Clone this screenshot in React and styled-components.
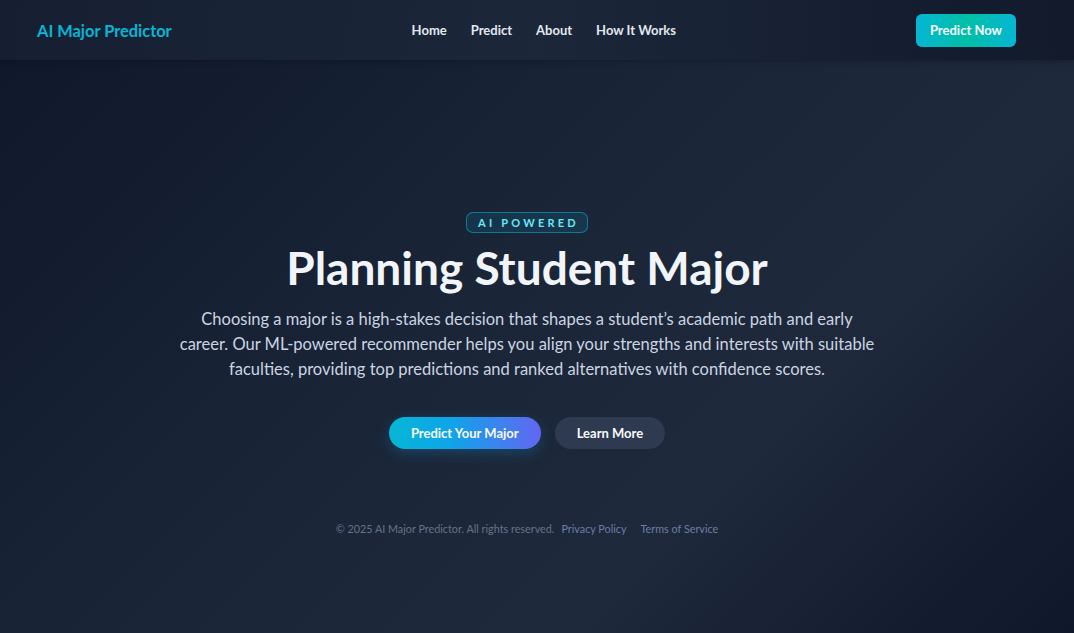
import styled, { createGlobalStyle } from "styled-components";

const GlobalStyle = createGlobalStyle`
  * { box-sizing: border-box; }
  html, body { margin: 0; padding: 0; }
  body {
    font-family: "Lato", "Noto Sans", sans-serif;
    background: #0f172a;
    color: #e2e8f0;
  }
`;

const Page = styled.div`
  min-height: 633px;
  display: flex;
  flex-direction: column;
  background: linear-gradient(135deg, #0f172a 0%, #1a2538 45%, #1e293b 70%, #0f172a 100%);
`;

const NavBar = styled.header`
  height: 60px;
  display: flex;
  align-items: center;
  justify-content: space-between;
  padding: 0 58px 0 37px;
  background: linear-gradient(90deg, rgba(23, 32, 51, 0.9), rgba(28, 39, 58, 0.9) 50%, rgba(17, 25, 43, 0.95));
  box-shadow: 0 1px 6px rgba(0, 0, 0, 0.25);
`;

const Logo = styled.div`
  font-size: 16.4px;
  font-weight: 700;
  color: #06b6d4;
`;

const Links = styled.nav`
  display: flex;
  gap: 24px;
`;

const NavLink = styled.a`
  font-size: 13px;
  font-weight: 700;
  color: #e2e8f0;
  text-decoration: none;
`;

const NavButton = styled.button`
  height: 33px;
  padding: 0 14px;
  border: none;
  border-radius: 6px;
  background: linear-gradient(90deg, #06b6d4, #00bfa5 50%, #06b6d4);
  color: #f8fafc;
  font-family: inherit;
  font-size: 13px;
  font-weight: 700;
`;

const Hero = styled.main`
  flex: 1;
  display: flex;
  flex-direction: column;
  align-items: center;
  padding: 152px 20px 0 0;
  text-align: center;
`;

const Badge = styled.span`
  display: inline-block;
  padding: 3px 8px 3px 11px;
  border: 1px solid rgba(6, 182, 212, 0.55);
  border-radius: 7px;
  background: rgba(6, 182, 212, 0.12);
  color: #67e8f9;
  font-size: 11px;
  font-weight: 700;
  letter-spacing: 3.2px;
`;

const Title = styled.h1`
  margin: 7px 0 12px;
  font-size: 46px;
  line-height: 1.2;
  font-weight: 700;
  color: #f1f5f9;
`;

const Lead = styled.p`
  margin: 0;
  max-width: 700px;
  font-size: 16.5px;
  line-height: 25px;
  color: #cbd5e1;
`;

const Actions = styled.div`
  display: flex;
  gap: 14px;
  margin-top: 35px;
`;

const Pill = styled.button`
  height: 32px;
  padding: 0 22px;
  border: none;
  border-radius: 16px;
  font-family: inherit;
  font-size: 13px;
  font-weight: 700;
  color: #f8fafc;
  background: ${(p) => (p.$primary ? "linear-gradient(90deg, #06b6d4, #0ea5e9 40%, #6366f1)" : "#2d3a50")};
  box-shadow: ${(p) => (p.$primary ? "0 4px 14px rgba(14, 165, 233, 0.25)" : "none")};
`;

const Footer = styled.footer`
  display: flex;
  margin-top: 73px;
  font-size: 10.8px;
  color: #64748b;
`;

const FootLink = styled.a`
  margin-left: ${(p) => p.$gap}px;
  color: #6b7ea6;
  text-decoration: none;
`;

export default function App() {
  return (
    <>
      <GlobalStyle />
      <Page>
        <NavBar>
          <Logo>AI Major Predictor</Logo>
          <Links>
            <NavLink href="#">Home</NavLink>
            <NavLink href="#">Predict</NavLink>
            <NavLink href="#">About</NavLink>
            <NavLink href="#">How It Works</NavLink>
          </Links>
          <NavButton>Predict Now</NavButton>
        </NavBar>
        <Hero>
          <Badge>AI POWERED</Badge>
          <Title>Planning Student Major</Title>
          <Lead>
            Choosing a major is a high-stakes decision that shapes a student’s academic path and early
            career. Our ML-powered recommender helps you align your strengths and interests with suitable
            faculties, providing top predictions and ranked alternatives with confidence scores.
          </Lead>
          <Actions>
            <Pill $primary>Predict Your Major</Pill>
            <Pill>Learn More</Pill>
          </Actions>
          <Footer>
            <span>© 2025 AI Major Predictor. All rights reserved.</span>
            <FootLink href="#" $gap={7}>Privacy Policy</FootLink>
            <FootLink href="#" $gap={14}>Terms of Service</FootLink>
          </Footer>
        </Hero>
      </Page>
    </>
  );
}
